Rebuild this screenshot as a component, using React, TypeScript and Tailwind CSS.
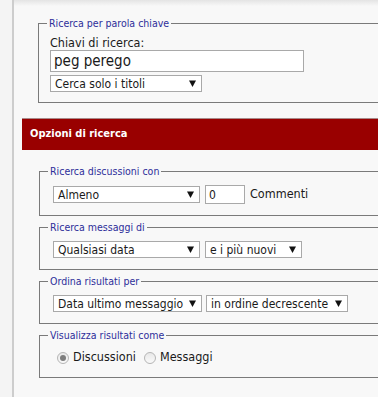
import React from "react";

function Arrow() {
  return (
    <svg width="7" height="7" viewBox="0 0 7 7" className="shrink-0">
      <path d="M0 0.5 H7 L3.5 7 Z" fill="#111" />
    </svg>
  );
}

function Sel({ label, w }: { label: string; w: string }) {
  return (
    <div
      className={`${w} h-[17px] shrink-0 bg-white border border-[#a9a9a9] flex items-center justify-between pl-[4px] pr-[5px] text-[12px] leading-none text-[#1a1a1a]`}
    >
      <span className="whitespace-nowrap">{label}</span>
      <Arrow />
    </div>
  );
}

function Group({ legend, children }: { legend: string; children: React.ReactNode }) {
  return (
    <fieldset className="w-[420px] border border-[#7a7a7a] pl-[13px] pt-[7px] pb-[11px]">
      <legend className="-ml-[5px] px-[2px] text-[10.5px] leading-[13px] text-[#2e2e9a]">{legend}</legend>
      {children}
    </fieldset>
  );
}

function Radio({ checked, label }: { checked?: boolean; label: string }) {
  return (
    <div className="flex items-center gap-[4px]">
      <div className="w-[12px] h-[12px] rounded-full border border-[#b5b5b5] bg-gradient-to-b from-[#e8e8e8] to-[#fafafa] flex items-center justify-center">
        {checked && <div className="w-[6px] h-[6px] rounded-full bg-[#7d7d7d]" />}
      </div>
      <span className="text-[12.5px] leading-none text-[#1a1a1a]">{label}</span>
    </div>
  );
}

export default function App() {
  return (
    <div className="w-[378px] h-[397px] overflow-hidden flex bg-[#f3f3f3] font-['DejaVu_Sans_Condensed','DejaVu_Sans',sans-serif]">
      <div className="w-[12px] shrink-0 bg-[#f4f4f4]" />
      <div className="w-[2px] shrink-0 bg-[#cdcdcd]" />
      <div className="flex-1 flex flex-col bg-[#f8f8f8] min-w-0">
        <div className="h-[6px] shrink-0 bg-gradient-to-b from-[#e4e4e4] to-[#f8f8f8]" />
        <div className="pl-[24px] mt-[11px]">
          <fieldset className="w-[420px] border border-[#7a7a7a] pl-[11px] pt-[5px] pb-[10px]">
            <legend className="-ml-[3px] px-[2px] text-[10.5px] leading-[13px] text-[#2e2e9a]">
              Ricerca per parola chiave
            </legend>
            <div className="text-[12.5px] leading-[15px] text-[#1a1a1a]">Chiavi di ricerca:</div>
            <div className="w-[254px] h-[22px] bg-white border border-[#a9a9a9] flex items-center pl-[3px] text-[15px] leading-none text-[#1a1a1a]">
              peg perego
            </div>
            <div className="mt-[3px]">
              <Sel label="Cerca solo i titoli" w="w-[152px]" />
            </div>
          </fieldset>
        </div>
        <div className="mt-[15px] ml-[8px] flex flex-col">
          <div className="h-[32px] border-t border-[#a88a8a] bg-[#990000] flex items-center pl-[8px] text-[11px] font-bold text-white">
            Opzioni di ricerca
          </div>
          <div className="pl-[17px] mt-[15px] flex flex-col gap-[5px]">
            <Group legend="Ricerca discussioni con">
              <div className="flex items-center">
                <Sel label="Almeno" w="w-[147px]" />
                <div className="ml-[5px] w-[40px] h-[19px] bg-white border border-[#a9a9a9] flex items-center pl-[3px] text-[12px] leading-none text-[#1a1a1a]">
                  0
                </div>
                <span className="ml-[5px] text-[12.5px] leading-none text-[#1a1a1a]">Commenti</span>
              </div>
            </Group>
            <Group legend="Ricerca messaggi di">
              <div className="flex items-center gap-[5px]">
                <Sel label="Qualsiasi data" w="w-[147px]" />
                <Sel label="e i più nuovi" w="w-[97px]" />
              </div>
            </Group>
            <Group legend="Ordina risultati per">
              <div className="flex items-center gap-[4px]">
                <Sel label="Data ultimo messaggio" w="w-[149px]" />
                <Sel label="in ordine decrescente" w="w-[142px]" />
              </div>
            </Group>
            <Group legend="Visualizza risultati come">
              <div className="h-[17px] flex items-center gap-[8px] pl-[4px]">
                <Radio checked label="Discussioni" />
                <Radio label="Messaggi" />
              </div>
            </Group>
          </div>
        </div>
      </div>
    </div>
  );
}
